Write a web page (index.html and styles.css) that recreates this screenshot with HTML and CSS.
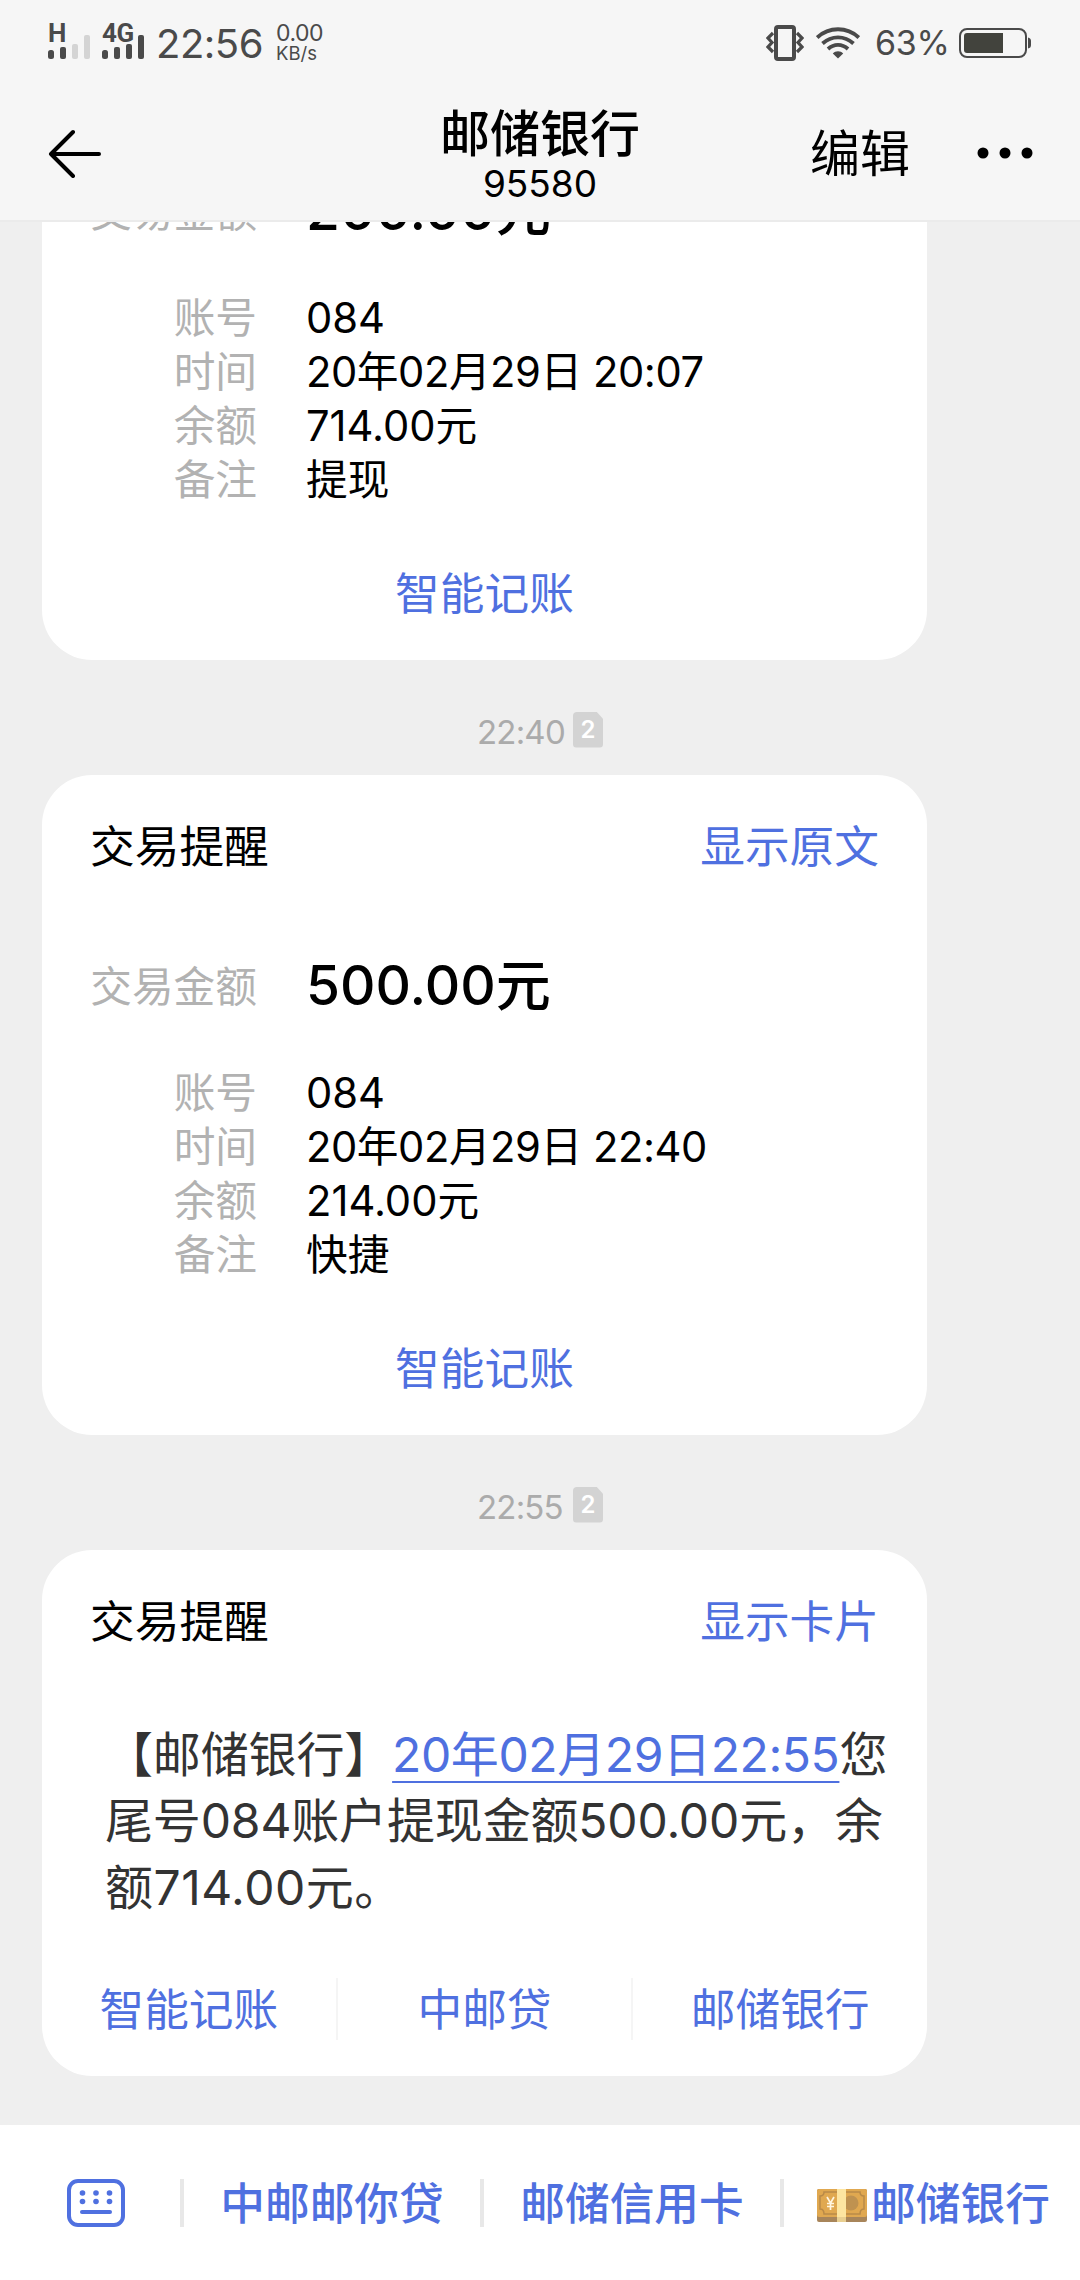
FILE: index.html
```
<!DOCTYPE html>
<html lang="zh-CN">
<head>
  <meta charset="UTF-8">
  <meta name="viewport" content="width=device-width, initial-scale=1.0">
  <title>邮储银行 95580</title>
  <link rel="stylesheet" href="styles.css">
</head>
<body>
  <div class="phone">
    <header class="top">
      <div class="status-bar">
        <div class="signal">
          <span class="net">H</span>
          <svg width="42" height="24" viewBox="0 0 42 24">
            <rect x="0" y="15" width="6" height="9" rx="2.5" fill="#4a4a4a"/>
            <rect x="12" y="12" width="6" height="12" rx="2" fill="#4a4a4a"/>
            <rect x="24" y="9" width="6" height="15" rx="2" fill="#d4d4d4"/>
            <rect x="36" y="0" width="6" height="24" rx="2" fill="#d4d4d4"/>
          </svg>
        </div>
        <div class="signal">
          <span class="net">4G</span>
          <svg width="42" height="24" viewBox="0 0 42 24" fill="#4a4a4a">
            <rect x="0" y="15" width="6" height="9" rx="2.5"/>
            <rect x="12" y="12" width="6" height="12" rx="2"/>
            <rect x="24" y="9" width="6" height="15" rx="2"/>
            <rect x="36" y="0" width="6" height="24" rx="2"/>
          </svg>
        </div>
        <span class="clock">22:56</span>
        <div class="speed">
          <span class="speed-num">0.00</span>
          <span class="speed-unit">KB/s</span>
        </div>
        <div class="status-right">
          <svg width="38" height="36" viewBox="0 0 38 36" fill="none" stroke="#4a4a4a">
            <rect x="10" y="2" width="18" height="32" rx="2" stroke-width="4"/>
            <path d="M7 8L2 13L6 17.500L2 22L7 27M31 8L36 13L32 17.500L36 22L31 27" stroke-width="3.200"/>
          </svg>
          <svg class="wifi" width="44" height="32" viewBox="0 0 44 32" fill="none" stroke="#4a4a4a" stroke-width="3.800">
            <path d="M1.200 10.500C13-.5 31-.5 42.800 10.500"/>
            <path d="M6.500 16.500C15.500 8.200 28.500 8.200 37.500 16.500"/>
            <path d="M12 22C18 16.600 26 16.600 32 22"/>
            <path d="M22 31.500L16.800 26.500C19.500 23.500 24.500 23.500 27.200 26.500Z" fill="#4a4a4a" stroke="none"/>
          </svg>
          <span class="percent">63%</span>
          <svg width="73" height="30" viewBox="0 0 73 30">
            <rect x="1" y="1" width="66" height="28" rx="7" fill="none" stroke="#4a4a4a" stroke-width="2"/>
            <path d="M8 5H44V25H8Q5 25 5 22V8Q5 5 8 5Z" fill="#42433d"/>
            <path d="M69 9.500Q72 10 72 13V17Q72 20 69 20.500Z" fill="#4a4a4a"/>
          </svg>
        </div>
      </div>

      <div class="nav">
        <div class="nav-left">
          <svg width="54" height="50" viewBox="0 0 54 50" fill="none" stroke="#000" stroke-width="4" stroke-linecap="round" stroke-linejoin="round">
            <path d="M26 4L4 26L26 48M4 26H52"/>
          </svg>
        </div>
        <div class="nav-title">
          <h1>邮储银行</h1>
          <p>95580</p>
        </div>
        <div class="nav-right">
          <span class="edit">编辑</span>
          <svg width="56" height="12" viewBox="0 0 56 12">
            <circle cx="6" cy="6" r="5.500"/>
            <circle cx="28" cy="6" r="5.500"/>
            <circle cx="50" cy="6" r="5.500"/>
          </svg>
        </div>
      </div>
    </header>

    <main class="messages">
      <section class="card">
        <div class="card-head">
          <h2>交易提醒</h2>
          <a class="link">显示原文</a>
        </div>
        <div class="amount">
          <span class="label">交易金额</span>
          <strong>200.00元</strong>
        </div>
        <dl class="details">
          <dt>账号</dt><dd>084</dd>
          <dt>时间</dt><dd class="time">20年02月29日 20:07</dd>
          <dt>余额</dt><dd>714.00元</dd>
          <dt>备注</dt><dd>提现</dd>
        </dl>
        <div class="actions"><a class="link">智能记账</a></div>
      </section>

      <div class="stamp">
        <span>22:40</span>
        <span class="sim">2</span>
      </div>

      <section class="card">
        <div class="card-head">
          <h2>交易提醒</h2>
          <a class="link">显示原文</a>
        </div>
        <div class="amount">
          <span class="label">交易金额</span>
          <strong>500.00元</strong>
        </div>
        <dl class="details">
          <dt>账号</dt><dd>084</dd>
          <dt>时间</dt><dd class="time">20年02月29日 22:40</dd>
          <dt>余额</dt><dd>214.00元</dd>
          <dt>备注</dt><dd>快捷</dd>
        </dl>
        <div class="actions"><a class="link">智能记账</a></div>
      </section>

      <div class="stamp">
        <span>22:55</span>
        <span class="sim">2</span>
      </div>

      <section class="card card-text">
        <div class="card-head">
          <h2>交易提醒</h2>
          <a class="link">显示卡片</a>
        </div>
        <p class="sms">【邮储银行】<a class="date">20年02月29日22:55</a>您<br>尾号084账户提现金额500.00元，余<br><span class="balance">额714.00元。</span></p>
        <div class="actions">
          <a class="link">智能记账</a>
          <a class="link">中邮贷</a>
          <a class="link">邮储银行</a>
        </div>
      </section>
    </main>

    <footer class="menu">
      <div class="keyboard">
        <svg width="58" height="48" viewBox="0 0 58 48" fill="#4f70e0">
          <rect x="2" y="2" width="54" height="44" rx="9" fill="none" stroke="#4f70e0" stroke-width="4"/>
          <circle cx="15.500" cy="14" r="2.800"/>
          <circle cx="29" cy="14" r="2.800"/>
          <circle cx="42.500" cy="14" r="2.800"/>
          <circle cx="15.500" cy="22.500" r="2.800"/>
          <circle cx="29" cy="22.500" r="2.800"/>
          <circle cx="42.500" cy="22.500" r="2.800"/>
          <rect x="13" y="31" width="32" height="4" rx="2"/>
        </svg>
      </div>
      <a class="menu-item"><span>中邮邮你贷</span></a>
      <a class="menu-item"><span>邮储信用卡</span></a>
      <a class="menu-item with-icon">
        <svg width="50" height="33" viewBox="0 0 50 33">
          <rect width="50" height="33" rx="2" fill="#a8855a"/>
          <rect width="50" height="28" rx="2" fill="#e0a850"/>
          <path d="M7 3H43Q43 7 47 7V20Q43 20 43 25H7Q7 20 3 20V7Q7 7 7 3Z" fill="none" stroke="#b98a48" stroke-width="1.500"/>
          <circle cx="34" cy="14" r="7.500" fill="#bf9250"/>
          <rect x="20" width="9" height="33" fill="#fde5a0"/>
          <rect x="20" y="28" width="9" height="5" fill="#e9cf90"/>
          <path d="M10 8L13.500 14L17 8M13.500 14V21M10 14.500H17M10 17.500H17" fill="none" stroke="#fff5df" stroke-width="1.700"/>
        </svg>
        <span>邮储银行</span>
      </a>
    </footer>
  </div>
</body>
</html>
```
FILE: styles.css
```
* {
  margin: 0;
  padding: 0;
  box-sizing: border-box;
}

body {
  font-family: Inter, "Noto Sans CJK SC", sans-serif;
  background: #efefef;
  color: #000;
}

svg {
  display: block;
  flex-shrink: 0;
}

.phone {
  width: 1080px;
  height: 2280px;
  display: flex;
  flex-direction: column;
  overflow: hidden;
}

/* status bar + title */
.top {
  height: 222px;
  flex-shrink: 0;
  background: #f6f6f6;
  border-bottom: 2px solid #ebebeb;
}

.status-bar {
  height: 86px;
  padding: 0 48px;
  display: flex;
  align-items: center;
  color: #4a4a4a;
}

.signal {
  width: 42px;
  height: 35px;
  margin: -4px 12px 0 0;
  display: grid;
}

.signal > * {
  grid-area: 1 / 1;
}

.signal svg {
  margin-top: 11px;
}

.net {
  font-family: Roboto, sans-serif;
  font-size: 26px;
  line-height: 18px;
  font-weight: 700;
  letter-spacing: -0.5px;
}

.clock {
  font-size: 40px;
  line-height: 48px;
  width: 120px;
  margin-top: 2px;
  letter-spacing: -0.5px;
}

.speed {
  display: flex;
  flex-direction: column;
}

.speed-num {
  font-size: 23px;
  line-height: 20px;
  letter-spacing: -0.5px;
}

.speed-unit {
  font-size: 18.5px;
  line-height: 20px;
}

.status-right {
  margin-left: auto;
  display: flex;
  align-items: center;
}

.wifi {
  margin: 0 15px 0 12px;
}

.percent {
  width: 84px;
  font-size: 34px;
  line-height: 40px;
  letter-spacing: -0.3px;
}

.nav {
  height: 134px;
  display: flex;
  padding: 0 47px;
}

.nav-left,
.nav-right {
  flex: 1;
  display: flex;
  align-items: center;
}

.nav-right {
  justify-content: flex-end;
}

.nav-title {
  text-align: center;
}

.nav-title h1 {
  font-size: 50px;
  line-height: 60px;
  font-weight: 500;
  margin-top: 18px;
}

.nav-title p {
  font-size: 37px;
  line-height: 40px;
}

.edit {
  font-size: 50px;
  line-height: 60px;
  margin: 2px 67px 0 0;
}

/* message list, newest at the bottom */
.messages {
  flex: 1;
  min-height: 0;
  display: flex;
  flex-direction: column;
  justify-content: flex-end;
  padding: 0 42px 49px;
  overflow: hidden;
}

.card {
  width: 885px;
  height: 660px;
  flex-shrink: 0;
  display: flex;
  flex-direction: column;
  background: #fff;
  border-radius: 50px;
}

.card-text {
  height: 526px;
}

.card-head {
  height: 140px;
  padding: 3px 48px 0;
  display: flex;
  align-items: center;
  justify-content: space-between;
}

.card-head h2,
.link {
  font-size: 44.7px;
  line-height: 60px;
  font-weight: 400;
}

.link,
.date {
  color: #4f70e0;
}

.amount {
  height: 143px;
  display: flex;
  align-items: center;
}

.label {
  width: 215px;
  text-align: right;
  font-size: 41.7px;
  line-height: 54px;
  color: #b2b2b2;
}

.amount strong {
  margin: -3px 0 0 49px;
  font-size: 55px;
  line-height: 66px;
  font-weight: 500;
}

.details {
  display: grid;
  grid-template-columns: 215px 1fr;
  column-gap: 49px;
  margin-top: 8px;
  font-size: 41.7px;
  line-height: 54px;
}

.details dt {
  text-align: right;
  color: #b2b2b2;
}

.time {
  letter-spacing: -0.45px;
}

.actions {
  height: 134px;
  margin-top: auto;
  display: flex;
  align-items: center;
}

.actions .link {
  flex: 1;
  padding-top: 2px;
  text-align: center;
}

.actions .link + .link {
  border-left: 2px solid #f5f5f5;
}

.sms {
  margin: 32px 0 0 63px;
  font-size: 48px;
  line-height: 66.4px;
  letter-spacing: -0.15px;
  color: #333;
  white-space: nowrap;
}

.date {
  letter-spacing: -0.4px;
  text-decoration: underline;
  text-decoration-thickness: 2px;
  text-underline-offset: 9px;
}

.balance {
  letter-spacing: 0.5px;
}

.stamp {
  height: 115px;
  flex-shrink: 0;
  padding-left: 435px;
  display: flex;
  align-items: center;
  font-size: 33px;
  line-height: 40px;
  letter-spacing: -0.8px;
  color: #ababab;
}

.stamp span:first-child {
  width: 96px;
  margin-top: 28px;
}

.sim {
  width: 30px;
  height: 36px;
  margin-top: 24px;
  border-radius: 4px;
  background: #d3d3d3;
  clip-path: polygon(0 0, 78% 0, 100% 20%, 100% 100%, 0 100%);
  color: #fff;
  font-size: 24px;
  line-height: 36px;
  letter-spacing: 0;
  font-weight: 600;
  text-align: center;
}

/* bottom shortcuts */
.menu {
  height: 155px;
  flex-shrink: 0;
  display: flex;
  align-items: center;
  background: #fff;
}

.keyboard {
  width: 180px;
  height: 48px;
  padding-left: 67px;
}

.menu-item {
  width: 300px;
  height: 48px;
  border-left: 4px solid #e8e8e8;
  display: flex;
  align-items: center;
  justify-content: center;
  gap: 4px;
  font-size: 44.7px;
  line-height: 48px;
  font-weight: 500;
  color: #4f70e0;
}

.menu-item span {
  padding-top: 3px;
}

.with-icon {
  padding-left: 3px;
}

.with-icon svg {
  margin-top: 5px;
}
```
